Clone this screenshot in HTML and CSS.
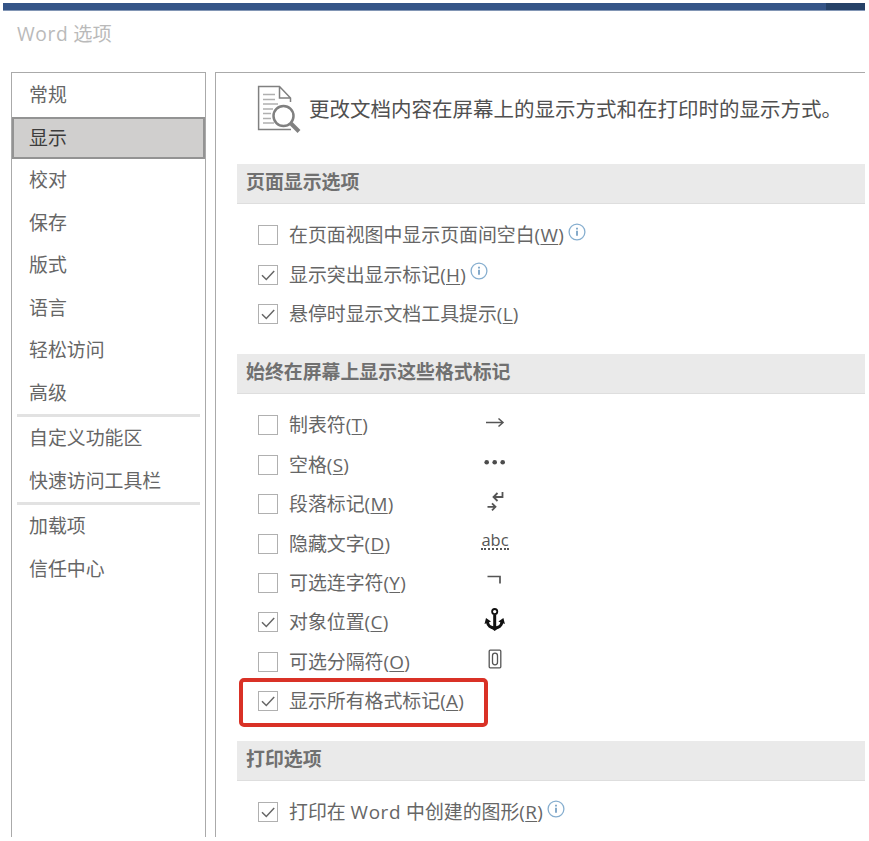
FILE: index.html
```html
<!DOCTYPE html>
<html lang="zh-CN">
<head>
<meta charset="utf-8">
<title>Word 选项</title>
<link rel="stylesheet" href="styles.css">
</head>
<body>
<svg class="defs" width="0" height="0">
  <symbol id="info" viewBox="0 0 18 18"><circle cx="9" cy="9" r="7.9" fill="#fff" stroke="#86aecf" stroke-width="1.3"/><path d="M9 7.8v5M9 4.8v1.6" stroke="#5e8fb9" stroke-width="1.5"/></symbol>
  <symbol id="check" viewBox="0 0 18 18"><path d="M3 9.2l4.3 4.3L15.2 5" fill="none" stroke="#666" stroke-width="1.5"/></symbol>
</svg>
<div class="dialog">
  <div class="topbar"><div class="topbar-end"></div></div>
  <h1 class="title"><span class="word">Word</span> 选项</h1>
  <div class="panes">
    <nav class="sidebar">
      <a class="item">常规</a>
      <a class="item selected">显示</a>
      <a class="item">校对</a>
      <a class="item">保存</a>
      <a class="item">版式</a>
      <a class="item">语言</a>
      <a class="item">轻松访问</a>
      <a class="item">高级</a>
      <hr class="rule">
      <a class="item">自定义功能区</a>
      <a class="item">快速访问工具栏</a>
      <hr class="rule">
      <a class="item">加载项</a>
      <a class="item">信任中心</a>
    </nav>
    <main class="content">
      <header class="intro">
        <svg class="doc" viewBox="0 0 44 48" fill="none" stroke="#808080">
          <path d="M33.5 17V13L22.5 1.6H1.6V44.5H34M22.5 1.6V13H33.5" stroke-width="1.5"/>
          <path d="M6 9.5h12M6 14.5h12M6 19h15M6 24h10M6 28.5h8M6 33.5h8M6 38h11" stroke="#b0b0b0" stroke-width="1.3"/>
          <circle cx="26.5" cy="31" r="10" fill="#fff" stroke-width="2.5"/>
          <path d="M34 38.5l8 8" stroke-width="4"/>
        </svg>
        <span>更改文档内容在屏幕上的显示方式和在打印时的显示方式。</span>
      </header>

      <h2 class="section-title">页面显示选项</h2>
      <div class="rows">
        <div class="row"><span class="box"></span><span class="label">在页面视图中显示页面间空白<span class="key">(<u>W</u>)</span></span><svg class="info"><use href="#info"/></svg></div>
        <div class="row"><span class="box"><svg><use href="#check"/></svg></span><span class="label">显示突出显示标记<span class="key">(<u>H</u>)</span></span><svg class="info"><use href="#info"/></svg></div>
        <div class="row"><span class="box"><svg><use href="#check"/></svg></span><span class="label">悬停时显示文档工具提示<span class="key">(<u>L</u>)</span></span></div>
      </div>

      <h2 class="section-title">始终在屏幕上显示这些格式标记</h2>
      <div class="rows marks">
        <div class="row"><span class="box"></span><span class="label">制表符<span class="key">(<u>T</u>)</span></span>
          <svg class="mark" viewBox="0 0 30 30"><path d="M6 12.5h17M18.5 8.5l4.5 4-4.500 4" fill="none" stroke="#555" stroke-width="1.5"/></svg></div>
        <div class="row"><span class="box"></span><span class="label">空格<span class="key">(<u>S</u>)</span></span>
          <svg class="mark" viewBox="0 0 30 30"><g fill="#4c4c4c"><circle cx="6.7" cy="12.2" r="2.3"/><circle cx="14.7" cy="12.2" r="2.3"/><circle cx="22.700" cy="12.2" r="2.3"/></g></svg></div>
        <div class="row"><span class="box"></span><span class="label">段落标记<span class="key">(<u>M</u>)</span></span>
          <svg class="mark" viewBox="0 0 30 30"><path d="M22.500 3v5h-9M17.500 4l-4 4 4 4M7.500 17.800h8M12 14.300l3.500 3.500-3.500 3.500" fill="none" stroke="#555" stroke-width="1.800"/></svg></div>
        <div class="row"><span class="box"></span><span class="label">隐藏文字<span class="key">(<u>D</u>)</span></span><span class="mark abc"><span>abc</span></span></div>
        <div class="row"><span class="box"></span><span class="label">可选连字符<span class="key">(<u>Y</u>)</span></span>
          <svg class="mark" viewBox="0 0 30 30"><path d="M7.500 8.500H20V15.500" fill="none" stroke="#555" stroke-width="1.700"/></svg></div>
        <div class="row"><span class="box"><svg><use href="#check"/></svg></span><span class="label">对象位置<span class="key">(<u>C</u>)</span></span>
          <svg class="mark" viewBox="0 0 30 30"><g fill="none" stroke="#111"><circle cx="14.700" cy="4.600" r="2.600" stroke-width="1.800"/><path d="M14.700 7.500v14" stroke-width="3"/><path d="M7.300 14.500c.5 4 3.500 6.500 7.400 6.500s6.900-2.500 7.400-6.500" stroke-width="3"/></g><path d="M4.500 17L6 11l5 3.500zM24.900 17L23.400 11l-5 3.500zM11.500 21.500h6.400l-3.200 2.500z" fill="#111"/></svg></div>
        <div class="row"><span class="box"></span><span class="label">可选分隔符<span class="key">(<u>O</u>)</span></span>
          <svg class="mark" viewBox="0 0 30 30"><g fill="none" stroke="#555"><rect x="9.200" y="3.200" width="11.600" height="17.600" rx="1" stroke-width="1.300"/><rect x="12.500" y="6.200" width="5" height="11.600" rx="2.500" stroke-width="1.300"/></g></svg></div>
        <div class="row"><span class="box"><svg><use href="#check"/></svg></span><span class="label">显示所有格式标记<span class="key">(<u>A</u>)</span></span><span class="highlight"></span></div>
      </div>

      <h2 class="section-title">打印选项</h2>
      <div class="rows">
        <div class="row"><span class="box"><svg><use href="#check"/></svg></span><span class="label">打印在 <span class="word">Word</span> 中创建的图形<span class="key">(<u>R</u>)</span></span><svg class="info"><use href="#info"/></svg></div>
      </div>
    </main>
  </div>
</div>
</body>
</html>
```
FILE: styles.css
```css
* { box-sizing: border-box; }
body {
  margin: 0;
  background: #fff;
  color: #666;
  font: 400 18.9px/24px "Open Sans", "Noto Sans CJK SC", sans-serif;
  overflow: hidden;
}
.defs { position: absolute; }
.dialog {
  width: 865px;
  height: 837px;
  padding: 3px 0 0 3px;
  display: flex;
  flex-direction: column;
  overflow: hidden;
}
.topbar {
  flex: none;
  height: 8px;
  display: flex;
  justify-content: flex-end;
  background: #355588;
  border-bottom: 1px solid #8296b5;
}
.topbar-end { width: 39px; background: #264268; }
.title {
  flex: none;
  height: 61px;
  margin: 0;
  padding: 11px 0 0 14px;
  font-size: 19.2px;
  font-weight: 400;
  color: #bababa;
}
.word { letter-spacing: 0.6px; }
.panes { flex: 1; min-height: 0; display: flex; gap: 9px; padding-left: 8px; }
.sidebar {
  width: 195px;
  border: solid #aaa;
  border-width: 1.5px 1.5px 0;
  padding-top: 1px;
}
.item {
  display: flex;
  align-items: center;
  height: 42.5px;
  padding: 0 0 0 17px;
}
.item.selected {
  background: #d0cfce;
  border: 2px solid #939393;
  padding-left: 15px;
  color: #3c3c3c;
}
.rule {
  height: 3px;
  margin: 0 5px;
  border: 0;
  background: #e2e2e2;
}
.content {
  flex: 1;
  min-width: 0;
  border: solid #aaa;
  border-width: 1.5px 0 0 1.5px;
  padding-left: 21px;
}
.intro {
  height: 91px;
  display: flex;
  padding: 12px 0 0 20px;
  gap: 8px;
  font-size: 20.5px;
  color: #505050;
  white-space: nowrap;
}
.intro span { padding-top: 12px; }
.doc { width: 44px; height: 48px; flex: none; }
.section-title {
  height: 40px;
  margin: 0;
  padding: 6px 0 0 9px;
  background: #eaeaea;
  border-bottom: 1px solid #dedede;
  font-size: 18.9px;
  font-weight: 700;
  color: #707070;
}
.rows { padding: 11.5px 0 20.5px 21px; }
.row {
  position: relative;
  height: 39.4px;
  display: flex;
  align-items: center;
  white-space: nowrap;
}
.box {
  flex: none;
  width: 20px;
  height: 20px;
  margin-right: 11px;
  border: 1px solid #b0b0b0;
}
.box svg { display: block; width: 18px; height: 18px; }
.key { letter-spacing: 0.3px; }
.label u { text-decoration-thickness: 1px; text-underline-offset: 2px; }
.info { width: 18px; height: 18px; margin: -7px 0 0 4px; }
.marks .label { width: 191px; }
.mark { width: 30px; height: 30px; }
.abc {
  display: flex;
  justify-content: center;
  padding-top: 2px;
  font-size: 16.5px;
  line-height: 17px;
  color: #555;
}
.abc span { height: 19px; border-bottom: 2px dotted #555; }
.highlight {
  position: absolute;
  left: -19px;
  top: -3px;
  width: 249px;
  height: 49px;
  border: 4.5px solid #d93126;
  border-radius: 5px;
}
```
